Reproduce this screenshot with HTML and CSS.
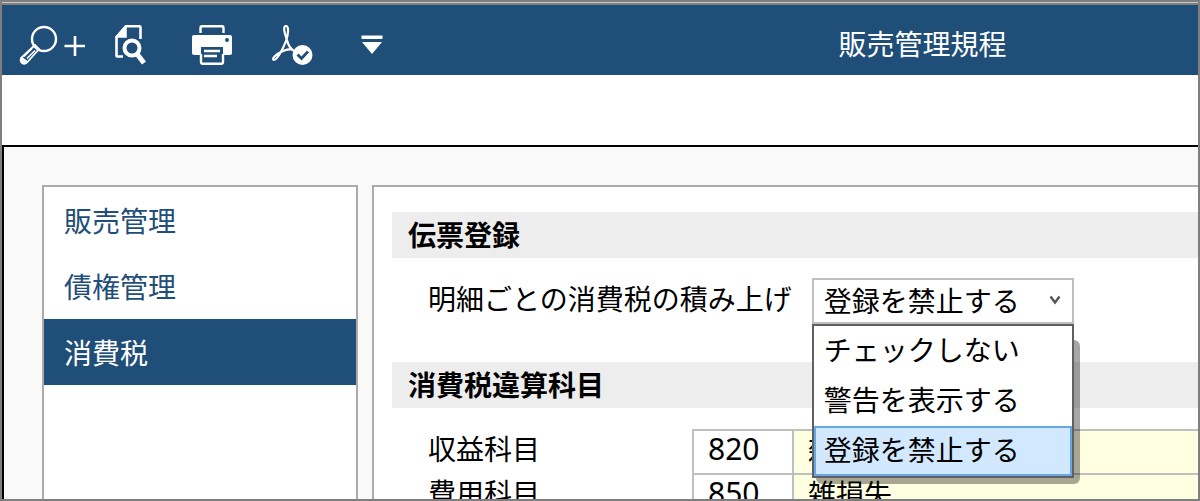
FILE: index.html
```html
<!DOCTYPE html>
<html lang="ja">
  <head>
    <meta charset="UTF-8" />
    <meta name="viewport" content="width=device-width, initial-scale=1.0" />
    <title>販売管理規程</title>
    <link rel="stylesheet" href="styles.css" />
  </head>
  <body>
    <div class="window">
      <header class="header">
        <div class="toolbar">
          <button class="tool tool-search" type="button" aria-label="検索">
            <svg width="68" height="40" viewBox="0 0 68 40" fill="none" stroke="#fff">
              <circle cx="25" cy="14" r="12" stroke-width="2.4" />
              <path d="M16 20L2.500 32.500Q0.500 36 3 38Q6 40 8.500 37L20 24Z" stroke-width="1.800" />
              <path d="M13 23.500L5 31.500M16 25.500L8 33.500" stroke-width="1.500" />
              <path d="M2.500 32L8.500 36.500Q6 39.500 3 37.500Q1 35 2.500 32Z" fill="#fff" />
              <path d="M45.500 21H66M56 11V31" stroke-width="2.600" />
            </svg>
          </button>
          <button class="tool tool-preview" type="button" aria-label="プレビュー">
            <svg width="32" height="40" viewBox="0 0 32 40" fill="none" stroke="#fff">
              <path d="M25.500 14V2.500Q25.500 1.200 24 1.200H11L1.500 12V30.500Q1.500 31.500 3 31.500H8" stroke-width="2.600" />
              <path d="M11 1V12H1.500Z" fill="#fff" stroke-width="1.500" />
              <circle cx="17" cy="23" r="7.500" stroke-width="4" />
              <path d="M22 29L29 38" stroke-width="5" />
            </svg>
          </button>
          <button class="tool tool-print" type="button" aria-label="印刷">
            <svg width="40" height="40" viewBox="0 0 40 40" fill="none" stroke="#fff">
              <path d="M8.500 8V3Q8.500 1.200 10 1.200H30Q31.500 1.200 31.500 3V8" stroke-width="2.400" />
              <path d="M2 10H38Q40 10 40 12V28Q40 30 38 30H2Q0 30 0 28V12Q0 10 2 10Z" fill="#fff" stroke="none" />
              <circle cx="35" cy="15" r="2" fill="#1f4e78" stroke="none" />
              <path d="M9 22H31V39H9Z" fill="#1f4e78" stroke="none" />
              <path d="M9 29V37Q9 38.700 11 38.700H29Q31 38.700 31 37V29" stroke-width="2.400" />
              <path d="M12 26H28M12 31H25" stroke-width="2.400" />
            </svg>
          </button>
          <button class="tool tool-pdf" type="button" aria-label="PDF">
            <svg width="41" height="40" viewBox="0 0 41 40" fill="none" stroke="#fff">
              <path d="M15 15C12 7 11 1 14 1C17 1 16.500 9 14 16C11 24 5 35 2 35C-1 34 4 29 11 26C16 24 20 24 21 25M15 15C16 20 19 24 22 26" stroke-width="2.200" />
              <circle cx="30.500" cy="30" r="10" fill="#fff" stroke="none" />
              <path d="M25.500 29.500L29.500 33.500L36 26.500" stroke="#1f4e78" stroke-width="2.800" />
            </svg>
          </button>
          <button class="tool tool-more" type="button" aria-label="その他">
            <svg width="22" height="20" viewBox="0 0 22 20" fill="#fff">
              <path d="M0.500 0.500H21.500V4H0.500ZM1 7H21L11 19Z" />
            </svg>
          </button>
        </div>
        <h1 class="header-title">販売管理規程</h1>
      </header>

      <div class="subbar"></div>

      <main class="main">
        <nav class="sidebar">
          <a class="sidebar-item" href="#sales">販売管理</a>
          <a class="sidebar-item" href="#credit">債権管理</a>
          <a class="sidebar-item active" href="#tax" aria-current="page">消費税</a>
        </nav>

        <div class="panel">
          <section>
            <h2 class="section-title">伝票登録</h2>
            <div class="form-row">
              <label class="form-label" for="tax-check">明細ごとの消費税の積み上げ</label>
              <div class="dropdown">
                <select class="dropdown-select" id="tax-check">
                  <option>チェックしない</option>
                  <option>警告を表示する</option>
                  <option selected>登録を禁止する</option>
                </select>
                <svg class="dropdown-arrow" width="12" height="10" viewBox="0 0 12 10">
                  <path d="M1.500 1.500L6 7.500L10.500 1.500" fill="none" stroke="#555" stroke-width="2.400" />
                </svg>
                <div class="dropdown-popup">
                  <ul class="dropdown-list" role="listbox" aria-label="明細ごとの消費税の積み上げ">
                    <li class="dropdown-item" role="option">チェックしない</li>
                    <li class="dropdown-item" role="option">警告を表示する</li>
                    <li class="dropdown-item selected" role="option" aria-selected="true">登録を禁止する</li>
                  </ul>
                </div>
              </div>
            </div>
          </section>

          <section>
            <h2 class="section-title">消費税違算科目</h2>
            <div class="accounts">
              <div class="account-row">
                <label class="account-label" for="income-code">収益科目</label>
                <input class="account-code" id="income-code" type="text" value="820" />
                <input class="account-name" type="text" value="雑収入" aria-label="収益科目名" readonly />
              </div>
              <div class="account-row">
                <label class="account-label" for="cost-code">費用科目</label>
                <input class="account-code" id="cost-code" type="text" value="850" />
                <input class="account-name" type="text" value="雑損失" aria-label="費用科目名" readonly />
              </div>
            </div>
          </section>
        </div>
      </main>
    </div>
  </body>
</html>
```
FILE: styles.css
```css
* {
  box-sizing: border-box;
}

body {
  margin: 0;
  font-family: "Noto Sans CJK JP", sans-serif;
  font-size: 28px;
  line-height: 40px;
  color: #000;
}

.window {
  display: flex;
  flex-direction: column;
  height: 100vh;
  overflow: hidden;
  padding-top: 1px;
  border: 2px solid #7f7f7f;
  background: #c8c8c8;
}

/* header */
.header {
  display: grid;
  grid-template-columns: 69.5% 1fr;
  flex: none;
  align-items: center;
  height: 72px;
  padding-left: 17px;
  border-top: 2px solid #7f7f7f;
  background: #1f4e78;
}

.toolbar {
  display: flex;
  align-items: center;
  padding-top: 10px;
}

.tool {
  display: flex;
  margin: 0;
  padding: 0;
  border: none;
  background: none;
}

.tool svg {
  display: block;
}

.tool-search {
  margin-right: 28px;
}

.tool-preview {
  margin-right: 45px;
}

.tool-print {
  margin-right: 40px;
}

.tool-pdf {
  margin-right: 48px;
}

.header-title {
  margin: 0;
  padding-top: 6px;
  font-size: 28px;
  font-weight: 400;
  color: #fff;
}

.subbar {
  flex: none;
  height: 70px;
  background: #fff;
}

/* main */
.main {
  display: flex;
  flex: 1;
  gap: 14px;
  min-height: 0;
  padding: 38px 0 0 38px;
  border-top: 2px solid #000;
  border-left: 2px solid #000;
  background: #f9f9f9;
}

.sidebar {
  flex: none;
  width: 316px;
  border: 2px solid #ababab;
  border-bottom: none;
  background: #fff;
}

.sidebar-item {
  display: block;
  padding: 13px 20px;
  color: #1f4e78;
  text-decoration: none;
}

.sidebar-item.active {
  background: #1f4e78;
  color: #fff;
}

.panel {
  flex: 1;
  min-width: 0;
  padding: 25px 0 0 18px;
  border: 2px solid #ababab;
  border-right: none;
  border-bottom: none;
  background: #fff;
}

.section-title {
  margin: 0;
  padding: 2px 16px 4px;
  background: #ededed;
  font-size: 28px;
  font-weight: 700;
}

.form-row {
  display: flex;
  gap: 20px;
  padding: 20px 0 38px 36px;
}

/* dropdown */
.dropdown {
  position: relative;
  width: 262px;
}

.dropdown-select {
  display: block;
  width: 100%;
  height: 46px;
  padding: 0 10px 8px;
  border: 2px solid #bfbfbf;
  border-radius: 0;
  appearance: none;
  background: #fff;
  font: inherit;
  color: #000;
}

.dropdown-arrow {
  position: absolute;
  top: 17px;
  right: 13px;
  pointer-events: none;
}

.dropdown-popup {
  position: absolute;
  top: 100%;
  left: 0;
  z-index: 1;
  width: 100%;
}

/* drop shadow under the open list */
.dropdown-popup::before {
  content: "";
  position: absolute;
  top: 16px;
  right: -6px;
  bottom: -6px;
  left: 4px;
  z-index: -1;
  border-radius: 6px;
  background: rgba(0, 0, 0, 0.35);
}

.dropdown-list {
  margin: 0;
  padding: 0;
  border: 2px solid #606060;
  background: #fff;
  list-style: none;
}

.dropdown-item {
  height: 50px;
  padding: 1px 8px;
  border: 2px solid transparent;
}

.dropdown-item.selected {
  border-color: #66a7e8;
  background: #d1e8ff;
}

/* accounts */
.accounts {
  padding: 21px 0 0 36px;
}

.account-row {
  display: flex;
  height: 44px;
}

.account-label {
  flex: none;
  width: 264px;
  line-height: 38px;
}

.account-code,
.account-name {
  height: 46px;
  padding: 0 14px 6px;
  border: 2px solid #bfbfbf;
  border-radius: 0;
  background: #fff;
  font: inherit;
  color: #000;
}

.account-code {
  flex: none;
  width: 102px;
  padding-bottom: 8px;
  font-family: "Noto Sans", sans-serif;
  font-size: 30px;
}

.account-name {
  flex: 1;
  min-width: 0;
  border-left: none;
  border-right: none;
  background: #ffffe1;
}
```
